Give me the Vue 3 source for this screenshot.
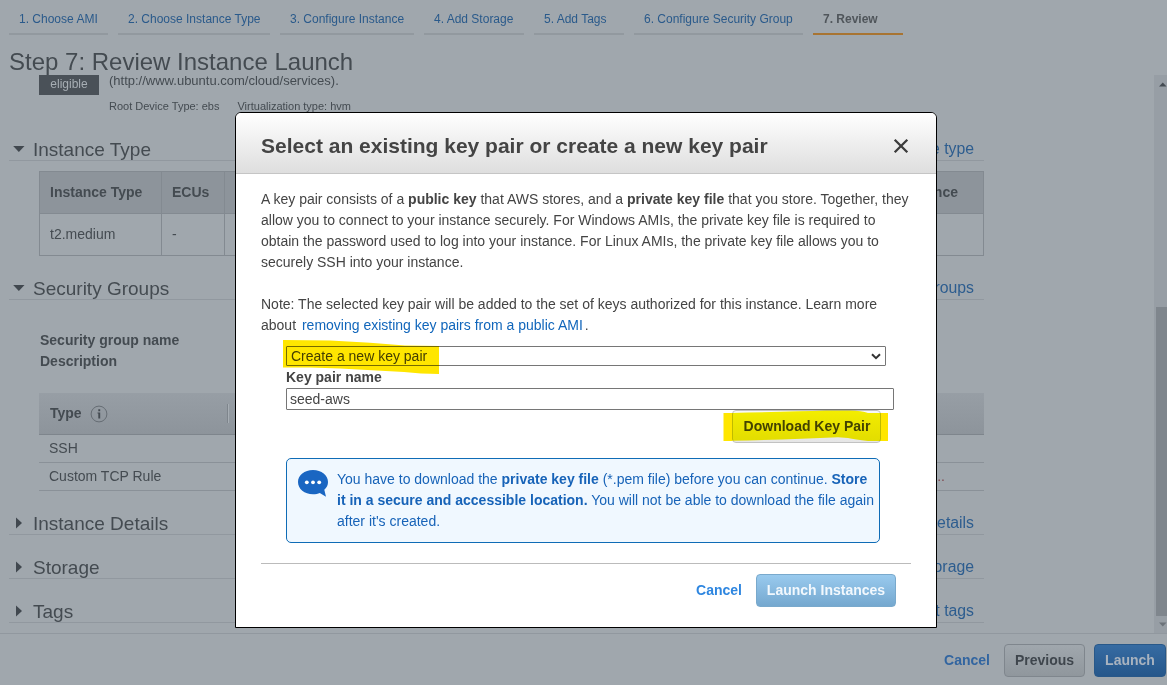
<script setup>
const tabs = [
  { label: '1. Choose AMI', w: 99 },
  { label: '2. Choose Instance Type', w: 152 },
  { label: '3. Configure Instance', w: 134 },
  { label: '4. Add Storage', w: 100 },
  { label: '5. Add Tags', w: 90 },
  { label: '6. Configure Security Group', w: 169 },
  { label: '7. Review', w: 90, active: true },
]
const collapsed = [
  { title: 'Instance Details', edit: 'Edit instance details' },
  { title: 'Storage', edit: 'Edit storage' },
  { title: 'Tags', edit: 'Edit tags' },
]
</script>

<template>
  <div class="page">
    <nav class="tabs">
      <div v-for="t in tabs" :key="t.label" class="tab" :class="{ active: t.active }" :style="{ width: t.w + 'px' }">{{ t.label }}</div>
    </nav>
    <h1>Step 7: Review Instance Launch</h1>

    <div class="scroller">
      <main class="content">
        <div class="ami">
          <span class="badge">eligible</span>
          <div class="ami-info">
            <div class="url">(http://www.ubuntu.com/cloud/services).</div>
            <div class="meta"><span>Root Device Type: ebs</span><span>Virtualization type: hvm</span></div>
          </div>
        </div>

        <section class="head first">
          <svg class="tri" width="12" height="12"><path d="M0.200 3h11.300L5.850 9z" /></svg>
          <h2>Instance Type</h2><a>Edit instance type</a>
        </section>
        <div class="itable">
          <b>Instance Type</b><b>ECUs</b><b class="last">Network Performance</b>
          <span>t2.medium</span><span>-</span><span class="last"></span>
        </div>

        <section class="head second">
          <svg class="tri" width="12" height="12"><path d="M0.200 3h11.300L5.850 9z" /></svg>
          <h2>Security Groups</h2><a>Edit security groups</a>
        </section>
        <div class="sg-labels"><div>Security group name</div><div>Description</div></div>
        <div class="rules">
          <div class="rules-head">
            <b>Type</b>
            <svg width="18" height="18" viewBox="0 0 18 18"><circle cx="9" cy="9" r="7.900" fill="none" stroke="#666d74" /><path d="M8.300 4.300h1.900v1.900H8.300zM7.500 7.500h2.700v6H8.300V8.600H7.500z" fill="#444b52" /></svg>
            <i class="sep"></i>
          </div>
          <div class="rule"><span>SSH</span></div>
          <div class="rule"><span>Custom TCP Rule</span><span class="dots">...</span></div>
        </div>

        <section v-for="s in collapsed" :key="s.title" class="head closed">
          <svg class="tri" width="12" height="12"><path d="M3 0.500v11L9 6z" /></svg>
          <h2>{{ s.title }}</h2><a>{{ s.edit }}</a>
        </section>
      </main>
      <div class="bar">
        <svg width="8" height="5"><path d="M0 4.500h7.500L3.750 0.500z" fill="#454c53" /></svg>
        <div class="thumb"></div>
        <svg width="8" height="5"><path d="M0 0.500h7.500L3.750 4.500z" fill="#6c737a" /></svg>
      </div>
    </div>

    <footer class="foot">
      <a>Cancel</a>
      <button class="prev">Previous</button>
      <button class="launch">Launch</button>
    </footer>

    <div class="modal">
      <header>
        <h3>Select an existing key pair or create a new key pair</h3>
        <svg width="16" height="16" viewBox="0 0 16 16"><path d="M1.700 1.700l12.600 12.600M14.300 1.700L1.700 14.300" stroke="#3c3c3c" stroke-width="2.300" /></svg>
      </header>
      <div class="body">
        <p>
          A key pair consists of a <b>public key</b> that AWS stores, and a <b>private key file</b> that you store. Together, they<br>
          allow you to connect to your instance securely. For Windows AMIs, the private key file is required to<br>
          obtain the password used to log into your instance. For Linux AMIs, the private key file allows you to<br>
          securely SSH into your instance.
        </p>
        <p>
          Note: The selected key pair will be added to the set of keys authorized for this instance. Learn more<br>
          about <a>removing existing key pairs from a public AMI</a>.
        </p>
        <div class="form">
          <div class="select">
            <span>Create a new key pair</span>
            <svg width="10" height="7" viewBox="0 0 10 7"><path d="M1 1.200l4 4 4-4" fill="none" stroke="#333" stroke-width="2" /></svg>
          </div>
          <label>Key pair name</label>
          <div class="input">seed-aws</div>
          <button class="download">Download Key Pair</button>
          <div class="info">
            <svg width="32" height="28" viewBox="0 0 32 28"><path d="M16 1C7.500 1 1 6.100 1 13S7.500 25.200 16 25.200c2.700 0 5-.5 6.800-1.300L29 27.700 27.300 20.800C29.800 18.700 31 16 31 13 31 6.100 24.500 1 16 1z" fill="#1a66c2" /><g fill="#fff"><circle cx="9.800" cy="13.300" r="1.900" /><circle cx="16" cy="13.300" r="1.900" /><circle cx="22.200" cy="13.300" r="1.900" /></g></svg>
            <div>
              You have to download the <b>private key file</b> (*.pem file) before you can continue. <b>Store</b><br>
              <b>it in a secure and accessible location.</b> You will not be able to download the file again<br>
              after it's created.
            </div>
          </div>
        </div>
        <div class="actions">
          <a>Cancel</a>
          <button>Launch Instances</button>
        </div>
      </div>
      <svg class="marker" width="700" height="514" viewBox="236 113 700 514">
        <path d="M283 340L330 340.500 370 342.800 405 345.500 439 346V374L421 373.500 404 372 340 368.500 310 367.500H283z" fill="#ffe600" />
        <path d="M723.500 413H732V441H723.500zM881 413H888V441H881z" fill="#ffe600" />
        <path d="M732 413Q790 411.800 826 410.600H850Q862 411 868 413H881V441H868Q855 439.500 848 438L838 437.300Q790 439.500 732 440.800z" fill="#fbf500" />
      </svg>
    </div>
  </div>
</template>

<style>
body { margin: 0; overflow: hidden; }
</style>

<style scoped>
* { box-sizing: border-box; }
.page {
  position: relative; width: 1167px; height: 685px; overflow: hidden;
  display: flex; flex-direction: column;
  background: #a0a7ad; color: #444b51;
  font: 14px/21px "Liberation Sans", Arial, sans-serif;
}
h1, h2, h3, p { margin: 0; font-weight: normal; }
button { font: bold 14px/31px "Liberation Sans", Arial, sans-serif; padding: 0; border-radius: 4px; text-align: center; height: 33px; }
a { color: #2d5d8f; }
.tabs { display: flex; gap: 10px; padding-left: 9px; height: 35px; flex: none; }
.tab { height: 35px; padding-left: 10px; border-bottom: 2px solid #92999f; font-size: 12px; line-height: 38px; color: #2a5a8b; white-space: nowrap; flex: none; }
.tab.active { border-color: #a87432; color: #50565b; font-weight: bold; }
h1 { font-size: 24px; line-height: 28px; height: 40px; padding: 13px 0 0 9px; flex: none; z-index: 1; }
.scroller { display: flex; justify-content: space-between; height: 558px; overflow: hidden; flex: none; }
.content { width: 975px; margin-left: 9px; }
.ami { display: flex; gap: 10px; padding-left: 30px; height: 63px; }
.badge { width: 60px; height: 20px; background: #4a5158; color: #a7aeb4; font-size: 12px; line-height: 18px; text-align: center; }
.url { font-size: 13px; line-height: 12px; }
.meta { display: flex; gap: 18px; font-size: 11px; line-height: 14px; margin-top: 12px; }
.head { display: flex; align-items: center; height: 23px; border-bottom: 1px solid #91989f; }
.head h2 { font-size: 19px; line-height: 23px; flex: 1; padding-left: 8px; }
.head a { font-size: 15.8px; padding: 0 10px 2px 0; }
.tri { margin-left: 4px; fill: #41484f; }
.itable { margin: 10px 0 21px 30px; display: grid; grid-template-columns: 122px 63px 1fr; grid-template-rows: 42px 42px; border: 1px solid #838a91; border-bottom: 0; height: 85px; }
.itable > * { border-bottom: 1px solid #838a91; border-right: 1px solid #838a91; padding: 0 10px; line-height: 41px; }
.itable b { background: #8d949b; }
.itable .last { border-right: 0; text-align: right; padding-right: 25px; }
.sg-labels { margin: 30px 0 21px 31px; font-weight: bold; }
.rules { margin-left: 30px; margin-bottom: 21px; }
.rules-head { display: flex; align-items: center; height: 42px; padding-left: 11px; background: linear-gradient(#979ea5, #8d949b); border-bottom: 1px solid #7e858c; }
.rules-head svg { margin-left: 8px; }
.sep { width: 2px; height: 19px; margin-left: 119px; border-left: 1px solid #7e858c; border-right: 1px solid #a7aeb4; }
.rule { display: flex; justify-content: space-between; height: 28px; line-height: 27px; padding-left: 10px; border-bottom: 1px solid #8a9198; }
.dots { color: #804a50; padding-right: 39px; }
.closed + .closed { margin-top: 21px; }
.bar { width: 13px; background: #979ea5; display: flex; flex-direction: column; align-items: flex-end; padding: 7px 0 6px; }
.bar svg { flex: none; }
.thumb { width: 11px; height: 309px; background: #7f868d; margin: 220px 0 6px; flex: none; }
.foot { display: flex; justify-content: flex-end; align-items: center; gap: 14px; flex: 1; border-top: 1px solid #91989f; font-weight: bold; padding: 2px 1px 0 0; }
.foot a { color: #3265a0; }
.foot button + button { margin-left: -5px; }
.prev { width: 81px; color: #3f464d; background: linear-gradient(#a0a7ad, #90979d); border: 1px solid #7f868d; }
.launch { width: 72px; color: #a9b3bf; background: linear-gradient(#366ba2, #26578b); border: 1px solid #285889; }

.modal { position: absolute; left: 235px; top: 112px; width: 702px; height: 516px; border: 1px solid #000; border-radius: 6px 6px 0 0; background: #fff; color: #444; overflow: hidden; }
.modal header { display: flex; align-items: center; justify-content: space-between; height: 61px; padding: 6px 27px 0 25px; background: linear-gradient(#fff, #dedede); border-bottom: 1px solid #c5c5c5; }
h3 { font-size: 21px; line-height: 22px; font-weight: bold; white-space: nowrap; }
.body { padding: 15px 25px 0; white-space: nowrap; }
.body p + p { margin-top: 21px; }
.body p a { color: #1166bb; margin: 0 2px; }
.form { padding: 10px 0 0 25px; }
.select { display: flex; align-items: center; justify-content: space-between; width: 600px; height: 20px; border: 1px solid #767676; border-radius: 1px; padding: 0 4px; }
label { display: block; font-weight: bold; height: 22px; line-height: 22px; }
.input { width: 608px; height: 22px; border: 1px solid #767676; border-radius: 1px; padding-left: 3px; line-height: 20px; }
.download { display: block; width: 149px; margin-left: 446px; border: 1px solid #c2c2c2; background: linear-gradient(#f7f7f7, #e6e6e6); color: #444; padding-left: 1px; }
.info { display: flex; gap: 8px; width: 594px; height: 85px; margin-top: 15px; padding: 10px 0 0 10px; border: 1px solid #0f6cb6; border-radius: 5px; background: #f0f8ff; color: #1763b8; }
.actions { display: flex; justify-content: flex-end; align-items: center; gap: 14px; margin-top: 20px; height: 44px; padding: 10px 15px 0 0; border-top: 1px solid #bbb; }
.actions a { color: #2e86e0; font-weight: bold; }
.actions button { width: 140px; color: #f2f8fd; background: linear-gradient(#99caee, #75a8cf); border: 1px solid #79a9cc; }
.marker { position: absolute; left: 0; top: 0; mix-blend-mode: multiply; pointer-events: none; }
</style>
